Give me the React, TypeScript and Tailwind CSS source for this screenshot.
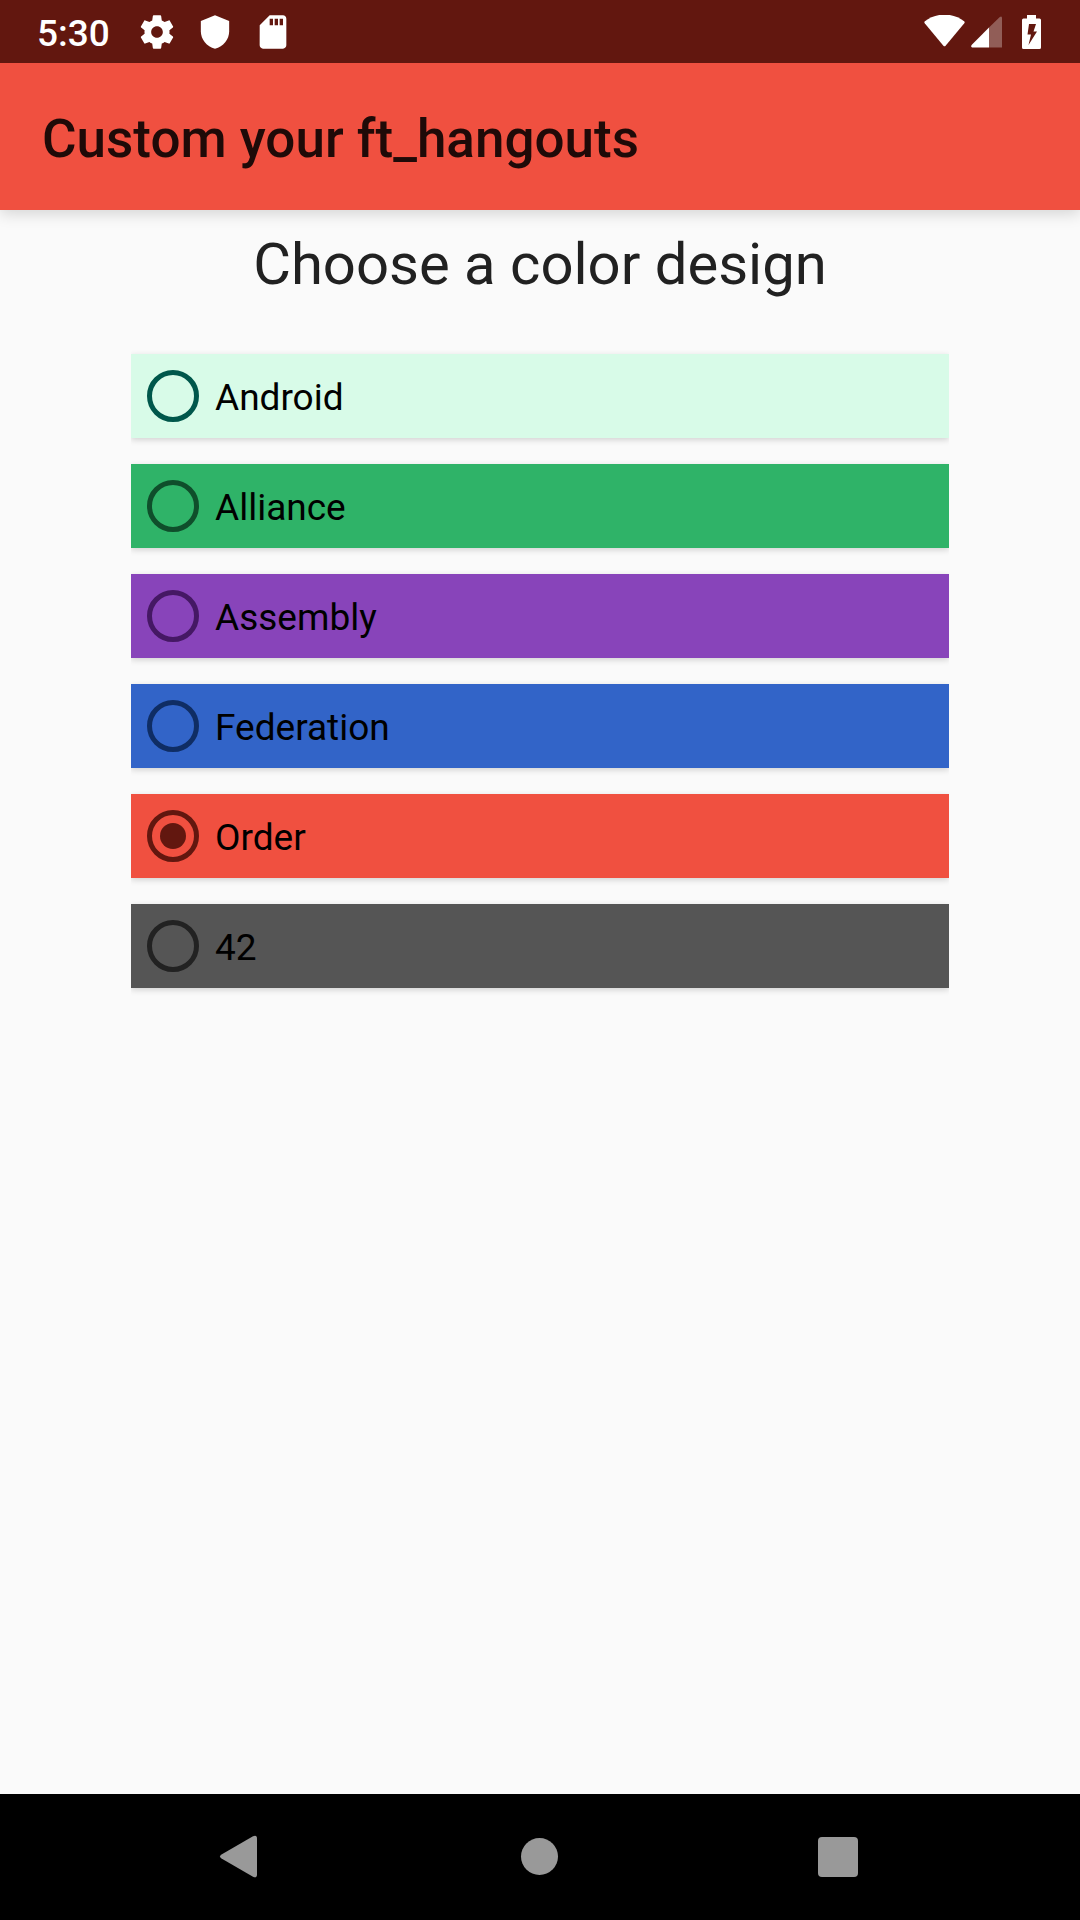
import { useState } from "react";

const designs = [
  { name: "Android", card: "bg-[#d8fbe8]", ring: "border-[#00574b] checked:bg-[#00574b]" },
  { name: "Alliance", card: "bg-[#2fb368]", ring: "border-[#0f4e2b] checked:bg-[#0f4e2b]" },
  { name: "Assembly", card: "bg-[#8844ba]", ring: "border-[#451864] checked:bg-[#451864]" },
  { name: "Federation", card: "bg-[#3264c8]", ring: "border-[#0f2d64] checked:bg-[#0f2d64]" },
  { name: "Order", card: "bg-[#f05040]", ring: "border-[#62170f] checked:bg-[#62170f]" },
  { name: "42", card: "bg-[#555555]", ring: "border-[#222222] checked:bg-[#222222]" },
];

function StatusBar() {
  return (
    <div className="relative z-10 flex h-[63px] items-center justify-between bg-[#62170f] pr-[39px] pl-[37px] text-white">
      <div className="flex items-center gap-[27px]">
        <span className="pt-1 text-[37px] leading-[44px] font-medium">5:30</span>
        <div className="flex items-center gap-[18px]">
          <svg viewBox="0 0 24 24" className="size-10" fill="currentColor" aria-hidden="true">
            <path d="M19.43 12.98c.04-.32.07-.64.07-.98s-.03-.66-.07-.98l2.11-1.65c.19-.15.24-.42.12-.64l-2-3.46c-.12-.22-.39-.3-.61-.22l-2.49 1c-.52-.4-1.08-.73-1.69-.98l-.38-2.65C14.46 2.18 14.25 2 14 2h-4c-.25 0-.46.18-.49.42l-.38 2.65c-.61.25-1.17.59-1.69.98l-2.49-1c-.23-.09-.49 0-.61.22l-2 3.46c-.13.22-.07.49.12.64l2.11 1.65c-.04.32-.07.65-.07.98s.03.66.07.98l-2.11 1.65c-.19.15-.24.42-.12.64l2 3.46c.12.22.39.3.61.22l2.49-1c.52.4 1.08.73 1.69.98l.38 2.65c.03.24.24.42.49.42h4c.25 0 .46-.18.49-.42l.38-2.65c.61-.25 1.17-.59 1.69-.98l2.49 1c.23.09.49 0 .61-.22l2-3.46c.12-.22.07-.49-.12-.64l-2.11-1.65zM12 15.5c-1.93 0-3.5-1.57-3.5-3.5s1.57-3.5 3.5-3.5 3.5 1.57 3.5 3.5-1.57 3.5-3.5 3.5z" />
          </svg>
          <svg viewBox="0 0 24 24" className="size-10" fill="currentColor" aria-hidden="true">
            <path d="M12 2 3.5 5.4v6.1c0 4.9 3.5 9.2 8.5 10.5 5-1.3 8.5-5.6 8.5-10.5V5.4z" />
          </svg>
          <svg viewBox="0 0 24 24" className="size-10" fill="currentColor" aria-hidden="true">
            <path d="M18 2h-8L4.02 8 4 20c0 1.1.9 2 2 2h12c1.1 0 2-.9 2-2V4c0-1.1-.9-2-2-2zm-6 6h-2V4h2v4zm3 0h-2V4h2v4zm3 0h-2V4h2v4z" />
          </svg>
        </div>
      </div>
      <div className="flex items-center">
        <svg viewBox="0 0 41 34" className="mr-1.5 h-[34px] w-[41px]" fill="currentColor" aria-hidden="true">
          <path d="M.6 6.5C6 2 13-.4 20.5-.4S35 2 40.4 6.500Q41 7.400 40.300 8.300L21.600 30.700Q20.500 31.800 19.400 30.700L.7 8.300Q0 7.400 .6 6.500z" />
        </svg>
        <svg viewBox="0 0 31 34" className="mr-5 h-[34px] w-[31px]" fill="currentColor" aria-hidden="true">
          <path d="M18 12.500 28.800 1.900Q31 .5 31 3V32.500H18z" fillOpacity="0.3" />
          <path d="M18 12.500V32.500H1.200Q-.6 32.100.6 29.900z" />
        </svg>
        <svg viewBox="0 0 19 34" className="h-[34px] w-[19px]" fill="currentColor" aria-hidden="true">
          <path
            fillRule="evenodd"
            d="M5 0h9v3.500h3.500Q19 3.500 19 5v27.500Q19 34 17.500 34h-16Q0 34 0 32.500V5Q0 3.500 1.500 3.500H5zM7 9 5.500 19.500H9L6.500 30 15 16.500H11.500L14 9z"
          />
        </svg>
      </div>
    </div>
  );
}

function NavigationBar() {
  return (
    <nav className="flex h-[126px] items-center bg-black px-[90px] text-[#999999]">
      <button type="button" aria-label="Back" className="flex flex-1 justify-center">
        <svg viewBox="0 0 80 80" className="size-20" fill="currentColor" aria-hidden="true">
          <path d="M53 19.2Q57 17.500 57 21.500V57.500Q57 61.500 53 59.800L21.500 41.500Q18.500 39.500 21.500 37.500z" />
        </svg>
      </button>
      <button type="button" aria-label="Home" className="flex flex-1 justify-center">
        <svg viewBox="0 0 80 80" className="size-20" fill="currentColor" aria-hidden="true">
          <circle cx="39.500" cy="39.500" r="18.500" />
        </svg>
      </button>
      <button type="button" aria-label="Recent apps" className="flex flex-1 justify-center">
        <svg viewBox="0 0 80 80" className="size-20" fill="currentColor" aria-hidden="true">
          <rect x="18" y="20" width="40" height="40" rx="4" />
        </svg>
      </button>
    </nav>
  );
}

export default function App() {
  const [selected, setSelected] = useState("Order");

  return (
    <div className="flex min-h-screen flex-col bg-[#fafafa] font-[Roboto,sans-serif]">
      <StatusBar />
      <header className="flex h-[147px] items-center bg-[#f05040] px-[42px] pt-1 shadow-[0_4px_14px_rgba(0,0,0,0.15)]">
        <h1 className="text-[53px] leading-[62px] font-medium text-[#1f0a08]">Custom your ft_hangouts</h1>
      </header>
      <main className="flex-1 pt-[18px]">
        <h2 id="design-heading" className="text-center text-[58px] leading-[72px] text-[#212121]">
          Choose a color design
        </h2>
        <div
          role="radiogroup"
          aria-labelledby="design-heading"
          className="mx-[131px] mt-[54px] flex flex-col gap-[26px] overflow-x-clip"
        >
          {designs.map((design) => (
            <label
              key={design.name}
              className={`flex h-[84px] items-center gap-4 px-4 shadow-[0_2px_6px_rgba(0,0,0,0.16)] ${design.card}`}
            >
              <input
                type="radio"
                name="design"
                value={design.name}
                checked={selected === design.name}
                onChange={() => setSelected(design.name)}
                className={`size-[52px] appearance-none rounded-full border-[5px] bg-clip-content p-2 ${design.ring}`}
              />
              <span className="pt-1 text-[37px] leading-[44px] text-black">{design.name}</span>
            </label>
          ))}
        </div>
      </main>
      <NavigationBar />
    </div>
  );
}
